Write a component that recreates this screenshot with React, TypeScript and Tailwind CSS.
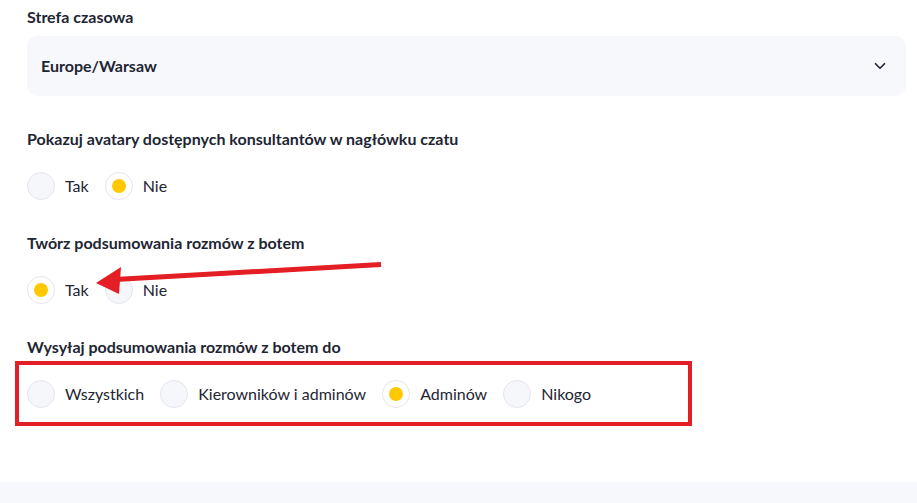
import { ChevronDown } from "lucide-react";

type Opt = { label: string; checked?: boolean };

function Radio({ label, checked }: Opt) {
  return (
    <label className="flex items-center gap-[10px]">
      {checked ? (
        <span className="w-[28px] h-[28px] rounded-full border border-[#e4e6ee] bg-white flex items-center justify-center">
          <span className="w-[14px] h-[14px] rounded-full bg-[#ffc800]" />
        </span>
      ) : (
        <span className="w-[28px] h-[28px] rounded-full border border-[#e4e6ee] bg-[#f6f7fb]" />
      )}
      <span className="text-[16px] leading-5 text-[#1e2533]">{label}</span>
    </label>
  );
}

function Group({ title, options }: { title: string; options: Opt[] }) {
  return (
    <div>
      <h3 className="text-[16px] leading-5 font-bold text-[#1e2533]">{title}</h3>
      <div className="flex items-center mt-[23px] gap-[16px]">
        {options.map((o) => (
          <Radio key={o.label} {...o} />
        ))}
      </div>
    </div>
  );
}

export default function App() {
  return (
    <div className="relative w-[917px] h-[503px] bg-white overflow-hidden font-['Lato','Liberation_Sans',sans-serif]">
      <div className="pl-[27px] pr-[11px] pt-[7px] h-[475px] flex flex-col gap-[33px]">
        <div>
          <h3 className="text-[16px] leading-5 font-bold text-[#1e2533]">Strefa czasowa</h3>
          <div className="mt-[9px] h-[60px] rounded-[10px] bg-[#f7f8fb] flex items-center justify-between pl-[14px] pr-[17px]">
            <span className="text-[16px] font-bold text-[#1e2533]">Europe/Warsaw</span>
            <ChevronDown size={18} strokeWidth={2.2} className="text-[#1e2533]" />
          </div>
        </div>

        <Group
          title="Pokazuj avatary dostępnych konsultantów w nagłówku czatu"
          options={[{ label: "Tak" }, { label: "Nie", checked: true }]}
        />

        <Group
          title="Twórz podsumowania rozmów z botem"
          options={[{ label: "Tak", checked: true }, { label: "Nie" }]}
        />

        <div className="relative">
          <Group
            title="Wysyłaj podsumowania rozmów z botem do"
            options={[
              { label: "Wszystkich" },
              { label: "Kierowników i adminów" },
              { label: "Adminów", checked: true },
              { label: "Nikogo" },
            ]}
          />
          {/* annotation box */}
          <div className="absolute left-[-12px] top-[24px] w-[677px] h-[65px] border-4 border-[#e31e24]" />
        </div>
      </div>

      <div className="h-[21px] mt-[7px] bg-[#f7f8fb]" />

      {/* annotation arrow */}
      <svg className="absolute left-0 top-0 pointer-events-none" width="917" height="503">
        <line x1="381" y1="264.5" x2="115" y2="279.5" stroke="#e31e24" strokeWidth="5" />
        <polygon points="96,283 121,267 119,294" fill="#e31e24" />
      </svg>
    </div>
  );
}
